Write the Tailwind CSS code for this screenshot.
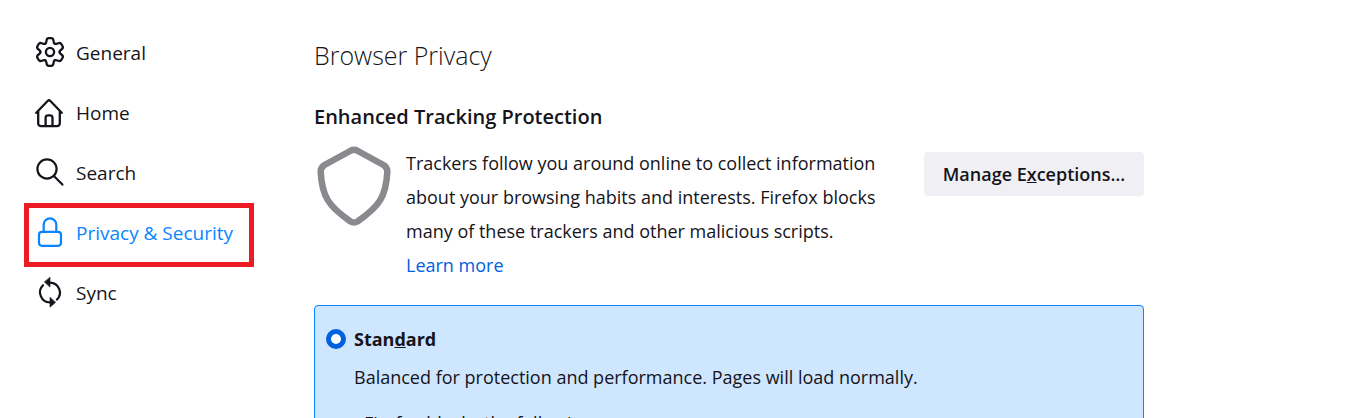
<!DOCTYPE html>
<html lang="en">
<head>
  <meta charset="UTF-8">
  <title>Settings</title>
  <script src="https://cdn.jsdelivr.net/npm/@tailwindcss/browser@4"></script>
</head>
<body class="bg-white h-screen overflow-hidden flex font-['Open_Sans','Noto_Sans',sans-serif] text-[#15141a]">

  <!-- Sidebar -->
  <nav class="w-[254px] shrink-0 pl-6 pt-[23px] text-[19px] leading-[30px]">
    <a href="#general" class="flex items-center gap-[11px] h-[60px] pl-[11px]">
      <svg class="w-[30px] h-[30px] shrink-0 overflow-visible" viewBox="0 1 30 30" fill="none" stroke="currentColor" stroke-width="2.3" stroke-linecap="round">
        <defs>
          <path id="tooth" d="M10.2 6.7C11.500 5.950 11.300 4.900 11.500 3.600Q11.900 1.200 13.700 1.200h2.600Q18.100 1.200 18.500 3.600C18.700 4.900 18.500 5.950 19.800 6.700"/>
        </defs>
        <use href="#tooth"/>
        <use href="#tooth" transform="rotate(60 15 15)"/>
        <use href="#tooth" transform="rotate(120 15 15)"/>
        <use href="#tooth" transform="rotate(180 15 15)"/>
        <use href="#tooth" transform="rotate(240 15 15)"/>
        <use href="#tooth" transform="rotate(300 15 15)"/>
        <circle cx="15" cy="15" r="4.100"/>
      </svg>
      General
    </a>
    <a href="#home" class="flex items-center gap-[11px] h-[60px] pl-[11px]">
      <svg class="w-[30px] h-[30px] shrink-0" viewBox="0 0 30 30" fill="none" stroke="currentColor" stroke-width="2.3" stroke-linecap="round" stroke-linejoin="round">
        <path d="M1.300 14.800 12.800 2.800q1.200-1 2.400 0L26.700 14.800M3.200 13.200v12.300a2.700 2.700 0 0 0 2.700 2.700h16.200a2.700 2.700 0 0 0 2.700-2.700V13.200"/>
        <path d="M10.600 28v-8.200a2.500 2.500 0 0 1 2.500-2.500h1.900a2.500 2.500 0 0 1 2.500 2.500v8.200"/>
      </svg>
      Home
    </a>
    <a href="#search" class="flex items-center gap-[11px] h-[60px] pl-[11px]">
      <svg class="w-[30px] h-[30px] shrink-0" viewBox="0 0 30 30" fill="none" stroke="currentColor" stroke-width="2.2" stroke-linecap="round">
        <circle cx="12" cy="11" r="9.600"/>
        <path d="m18.900 18 8.500 8.600"/>
      </svg>
      Search
    </a>
    <a href="#privacy" class="flex items-center gap-[11px] h-[64px] -mb-1 pl-1.5 pb-1 border-5 border-[#ed1c24] text-[#0a84ff]">
      <svg class="w-[30px] h-[30px] shrink-0 overflow-visible" viewBox="0 0 30 30" fill="none" stroke="currentColor" stroke-width="2.2">
        <rect x="4" y="13.800" width="22" height="14" rx="3"/>
        <path d="M8.700 13.800V6.700a6.300 6.300 0 0 1 12.600 0v7.100"/>
      </svg>
      Privacy &amp; Security
    </a>
    <a href="#sync" class="flex items-center gap-[11px] h-[60px] pl-[11px]">
      <svg class="w-[30px] h-[30px] shrink-0 overflow-visible" viewBox="0 0 30 30" fill="none" stroke="currentColor" stroke-width="2.2" stroke-linecap="round">
        <path d="M8 7.200A10 10 0 0 0 15 24.300M22 21.600A10 10 0 0 0 15 4.600"/>
        <path fill="currentColor" stroke-width=".6" stroke-linejoin="round" d="M15-.5v9.600L9.500 4.100zM15 19.600v9.600l5.500-4.800z"/>
      </svg>
      Sync
    </a>
  </nav>

  <!-- Settings -->
  <main class="flex-1 max-w-[890px] pl-[60px] pt-[37px]">
    <h1 class="text-[25px] leading-9 font-light">Browser Privacy</h1>
    <h2 class="mt-[29px] text-[20px] leading-[30px] font-semibold">Enhanced Tracking Protection</h2>

    <div class="mt-3.5 flex items-start">
      <svg class="w-20 h-20 shrink-0" viewBox="0 0 80 80" fill="none" stroke="#8a898e" stroke-width="6.5" stroke-linejoin="round">
        <path d="M37 4.500q3-1.500 6 0L69.500 19q4 2.500 3.800 7C72 50 66 60 43.500 75.500q-3.500 2-7 0C14 60 8 50 6.700 26q-.2-4.500 3.800-7z"/>
      </svg>
      <p class="ml-3 w-[490px] text-[18px] leading-[34px]">
        Trackers follow you around online to collect information about your browsing habits and interests. Firefox blocks many of these trackers and other malicious scripts.
        <a href="#learn-more" class="block text-[#0061e0]">Learn more</a>
      </p>
      <button type="button" class="ml-auto mt-1.5 w-[220px] h-11 rounded bg-[#f0f0f4] text-[18px] font-semibold">Manage E<span class="underline">x</span>ceptions…</button>
    </div>

    <div class="mt-[23px] border border-[#0a84ff] rounded bg-[#cfe6ff] px-[11px] py-[18px] text-[18px] leading-[30px]">
      <div class="flex items-center gap-2">
        <input type="radio" id="standard" name="level" checked class="appearance-none w-5 h-5 rounded-full bg-white border-5 border-[#0061e0]">
        <label for="standard" class="font-bold">Stan<span class="underline">d</span>ard</label>
      </div>
      <p class="mt-2 pl-7">Balanced for protection and performance. Pages will load normally.</p>
      <p class="mt-4 pl-[38px]">Firefox blocks the following:</p>
    </div>
  </main>
</body>
</html>
